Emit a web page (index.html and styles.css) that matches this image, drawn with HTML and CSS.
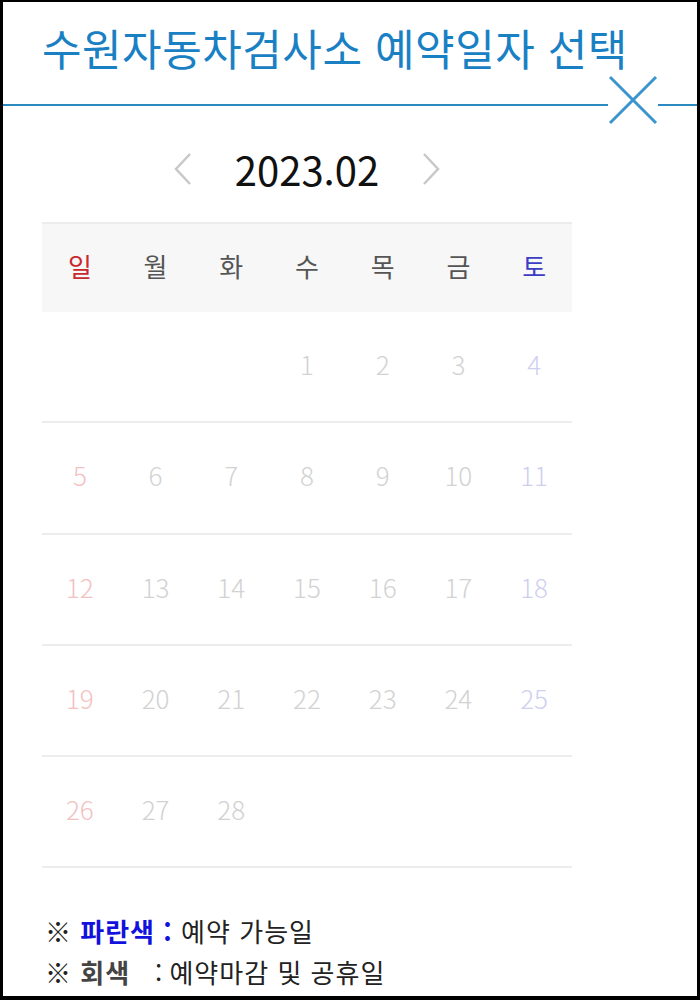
FILE: index.html
```html
<!DOCTYPE html>
<html lang="ko">
<head>
    <meta charset="UTF-8">
    <meta name="viewport" content="width=device-width, initial-scale=1.0">
    <title>예약일자 선택</title>
    <link rel="stylesheet" href="styles.css">
</head>
<body>

<div class="page">
    <h1 class="title">수원자동차검사소 예약일자 선택</h1>

    <div class="title-rule">
        <span class="rule"></span>
        <span class="close-btn" onclick="window.history.back()">
            <svg width="50" height="50" viewBox="0 0 50 50">
                <line x1="2" y1="2" x2="48" y2="48" stroke="#3a95cf" stroke-width="3"/>
                <line x1="48" y1="2" x2="2" y2="48" stroke="#3a95cf" stroke-width="3"/>
            </svg>
        </span>
        <span class="rule rule-end"></span>
    </div>

    <div class="calendar">
        <div class="month-nav">
            <span class="arrow">
                <svg width="20" height="34" viewBox="0 0 20 34"><polyline points="17,2 3,17 17,32" fill="none" stroke="#c8c8c8" stroke-width="2.5"/></svg>
            </span>
            <span class="month">2023.02</span>
            <span class="arrow">
                <svg width="20" height="34" viewBox="0 0 20 34"><polyline points="3,2 17,17 3,32" fill="none" stroke="#c8c8c8" stroke-width="2.5"/></svg>
            </span>
        </div>

        <table class="days">
            <thead>
                <tr>
                    <th class="sun">일</th><th>월</th><th>화</th><th>수</th><th>목</th><th>금</th><th class="sat">토</th>
                </tr>
            </thead>
            <tbody>
                <tr>
                    <td></td><td></td><td></td><td>1</td><td>2</td><td>3</td><td class="sat">4</td>
                </tr>
                <tr>
                    <td class="sun">5</td><td>6</td><td>7</td><td>8</td><td>9</td><td>10</td><td class="sat">11</td>
                </tr>
                <tr>
                    <td class="sun">12</td><td>13</td><td>14</td><td>15</td><td>16</td><td>17</td><td class="sat">18</td>
                </tr>
                <tr>
                    <td class="sun">19</td><td>20</td><td>21</td><td>22</td><td>23</td><td>24</td><td class="sat">25</td>
                </tr>
                <tr>
                    <td class="sun">26</td><td>27</td><td>28</td><td></td><td></td><td></td><td></td>
                </tr>
            </tbody>
        </table>
    </div>

    <ul class="legend">
        <li>※ <b class="blue">파란색 :</b> 예약 가능일</li>
        <li>※ <b class="gray">회색</b>&nbsp;&nbsp;&nbsp;:&thinsp;예약마감 및 공휴일</li>
    </ul>
</div>

</body>
</html>
```

FILE: styles.css
```css
body {
    margin: 0;
    padding: 0;
    background-color: #000;
    font-family: "Noto Sans CJK KR", "Noto Sans", sans-serif;
}
.page {
    background-color: #fff;
    margin: 2px 3px 0 3px;
    height: 994px;
    overflow: hidden;
}
.title {
    margin: 0;
    padding: 17px 0 0 39px;
    font-size: 43px;
    font-weight: 400;
    line-height: 56px;
    color: #1a80c4;
    letter-spacing: 0.5px;
}
.title-rule {
    display: flex;
    align-items: center;
}
.rule {
    flex: 1;
    height: 2px;
    background-color: #2b8bc1;
}
.rule-end {
    flex: none;
    width: 39px;
}
.close-btn {
    display: block;
    width: 50px;
    height: 50px;
    margin-bottom: 10px;
    cursor: pointer;
}
.close-btn svg {
    display: block;
}
.calendar {
    width: 530px;
    margin: 4px 0 0 39px;
}
.month-nav {
    display: flex;
    justify-content: center;
    align-items: center;
    gap: 42px;
    height: 60px;
}
.arrow svg {
    display: block;
}
.month {
    font-size: 40px;
    color: #111;
}
.days {
    width: 100%;
    border-collapse: collapse;
    table-layout: fixed;
    margin-top: 23px;
}
.days th {
    height: 83px;
    padding: 0 0 5px;
    background-color: #f7f7f7;
    border-top: 2px solid #ececec;
    font-size: 26px;
    font-weight: 400;
    color: #555;
}
.days td {
    height: 103.3px;
    padding: 0 0 6px;
    border-bottom: 2px solid #ededed;
    text-align: center;
    font-size: 26px;
    font-weight: 300;
    color: #d2d2d2;
}
.days th.sun {
    color: #c8282e;
}
.days th.sat {
    color: #3c3cc4;
}
.days td.sun {
    color: #f2c2c2;
}
.days td.sat {
    color: #cfcff0;
}
.legend {
    list-style-type: none;
    margin: 42px 0 0 42px;
    padding: 0;
    font-size: 26px;
    line-height: 41px;
    letter-spacing: 1px;
    color: #222;
}
.legend b.blue {
    color: #1212dc;
}
.legend b.gray {
    color: #444;
}
```
